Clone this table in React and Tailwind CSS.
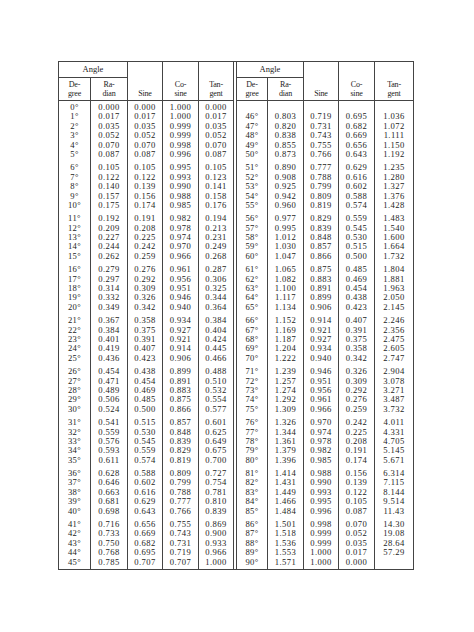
import React from 'react';

// valores de una fila, en grados
const fila = (d) => {
  const r = (d * Math.PI) / 180;
  const t = Math.tan(r);
  return {
    deg: `${d}°`,
    rad: r.toFixed(3),
    sin: Math.sin(r).toFixed(3),
    cos: Math.cos(r).toFixed(3),
    tan: d === 90 ? '' : d >= 85 ? t.toFixed(2) : t.toFixed(3),
  };
};

const rango = (a, b) => Array.from({ length: b - a + 1 }, (_, i) => fila(a + i));

// izquierda: 0-5, 6-10 ... 41-45 / derecha: (vacía) 46-50 ... 86-90
const gruposIzq = [rango(0, 5)];
for (let d = 6; d <= 41; d += 5) gruposIzq.push(rango(d, d + 4));
const gruposDer = [[null, ...rango(46, 50)]];
for (let d = 51; d <= 86; d += 5) gruposDer.push(rango(d, d + 4));

const Cuerpo = ({ grupos, campo }) => (
  <div className="pt-[2px] pb-[2.5px]">
    {grupos.map((g, i) => (
      <div key={i} className={i > 0 ? 'mt-[4px]' : ''}>
        {g.map((f, j) => (
          <div key={j} className="h-[9.4px] leading-[9.4px] text-center text-[8.6px] tracking-[0.4px] whitespace-nowrap">
            {f ? f[campo] : ''}
          </div>
        ))}
      </div>
    ))}
  </div>
);

const Sub = ({ children }) => (
  <div className="h-[23px] border-b border-[#444] flex flex-col items-center justify-end pb-[2px] text-[8px] leading-[9px] tracking-[-0.2px]">
    {children}
  </div>
);

const Alto = ({ children }) => (
  <div className="h-[39px] border-b border-[#444] flex flex-col items-center justify-end pb-[2px] text-[8px] leading-[9px] tracking-[-0.2px]">
    {children}
  </div>
);

const Mitad = ({ grupos, derecha }) => (
  <div className="flex">
    <div className="flex flex-col border-r border-[#444]">
      <div className="h-[16px] border-b border-[#444] text-center text-[8.5px] leading-[15px]">Angle</div>
      <div className="flex flex-1">
        <div className={derecha ? 'w-[31px] border-r border-[#444]' : 'w-[32px] border-r border-[#444]'}>
          <Sub>
            <span>De-</span>
            <span>gree</span>
          </Sub>
          <Cuerpo grupos={grupos} campo="deg" />
        </div>
        <div className={derecha ? 'w-[35px]' : 'w-[36px]'}>
          <Sub>
            <span>Ra-</span>
            <span>dian</span>
          </Sub>
          <Cuerpo grupos={grupos} campo="rad" />
        </div>
      </div>
    </div>
    <div className="w-[35px] border-r border-[#444]">
      <Alto>
        <span>Sine</span>
      </Alto>
      <Cuerpo grupos={grupos} campo="sin" />
    </div>
    <div className="w-[36px] border-r border-[#444]">
      <Alto>
        <span>Co-</span>
        <span>sine</span>
      </Alto>
      <Cuerpo grupos={grupos} campo="cos" />
    </div>
    <div className={derecha ? 'w-[38px]' : 'w-[38px] border-r-4 border-double border-[#444]'}>
      <Alto>
        <span>Tan-</span>
        <span>gent</span>
      </Alto>
      <Cuerpo grupos={grupos} campo="tan" />
    </div>
  </div>
);

export default function App() {
  return (
    <div className="w-[474px] h-[632px] bg-white pt-[55px] pl-[58px] font-['Liberation_Serif',serif] text-[#1c1c1c]">
      <div className="inline-flex border border-[#444]">
        <Mitad grupos={gruposIzq} />
        <Mitad grupos={gruposDer} derecha />
      </div>
    </div>
  );
}
